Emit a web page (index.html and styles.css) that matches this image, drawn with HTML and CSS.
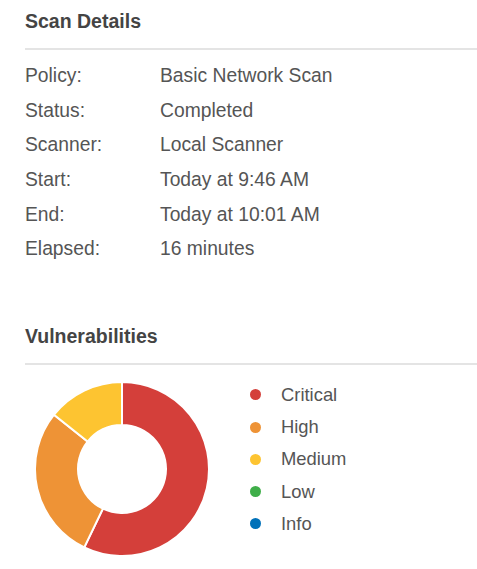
FILE: index.html
```html
<!DOCTYPE html>
<html>
<head>
<meta charset="utf-8">
<link rel="stylesheet" href="styles.css">
</head>
<body>
<div class="panel">
  <section class="section">
    <h2 class="section-title">Scan Details</h2>
    <dl class="details">
      <div class="row"><dt>Policy:</dt><dd>Basic Network Scan</dd></div>
      <div class="row"><dt>Status:</dt><dd>Completed</dd></div>
      <div class="row"><dt>Scanner:</dt><dd>Local Scanner</dd></div>
      <div class="row"><dt>Start:</dt><dd>Today at 9:46 AM</dd></div>
      <div class="row"><dt>End:</dt><dd>Today at 10:01 AM</dd></div>
      <div class="row"><dt>Elapsed:</dt><dd>16 minutes</dd></div>
    </dl>
  </section>
  <section class="section vulns">
    <h2 class="section-title">Vulnerabilities</h2>
    <div class="chart-area">
      <svg class="donut" width="180" height="180" viewBox="0 0 180 180">
        <path class="seg-critical" d="M90,3 A87,87 0 1 1 52.27,168.40 L70.92,129.65 A44,44 0 1 0 90,46 Z"/>
        <path class="seg-high" d="M52.27,168.40 A87,87 0 0 1 22.01,35.72 L55.61,62.55 A44,44 0 0 0 70.92,129.65 Z"/>
        <path class="seg-medium" d="M22.01,35.72 A87,87 0 0 1 90,3 L90,46 A44,44 0 0 0 55.61,62.55 Z"/>
      </svg>
      <ul class="legend">
        <li><span class="dot critical"></span>Critical</li>
        <li><span class="dot high"></span>High</li>
        <li><span class="dot medium"></span>Medium</li>
        <li><span class="dot low"></span>Low</li>
        <li><span class="dot info"></span>Info</li>
      </ul>
    </div>
  </section>
</div>
</body>
</html>
```
FILE: styles.css
```css
html, body {
  margin: 0;
  padding: 0;
  background: #fff;
}
body {
  font-family: "Liberation Sans", Arial, sans-serif;
  color: #555;
}
.panel {
  padding-left: 25px;
}
.section-title {
  margin: 0;
  padding: 9px 0 15px;
  line-height: 24px;
  font-size: 19.5px;
  font-weight: bold;
  color: #444;
  border-bottom: 2px solid #e4e4e4;
}
.details {
  margin: 9px 0 0;
  padding: 0;
}
.row {
  display: flex;
  height: 34.6px;
  align-items: center;
  font-size: 19.3px;
}
.row dt {
  width: 135px;
  margin: 0;
}
.row dd {
  margin: 0;
}
.vulns {
  margin-top: 48px;
}
.chart-area {
  display: flex;
  align-items: flex-start;
  margin-top: 14px;
}
.donut {
  display: block;
  margin-left: 7px;
}
.donut path {
  stroke: #fff;
  stroke-width: 2;
}
.seg-critical { fill: #d43f3a; }
.seg-high { fill: #ee9336; }
.seg-medium { fill: #fdc431; }
.legend {
  list-style: none;
  margin: 0 0 0 38px;
  padding: 0;
}
.legend li {
  display: flex;
  align-items: center;
  height: 32.3px;
  font-size: 18.4px;
}
.dot {
  width: 11px;
  height: 11px;
  border-radius: 50%;
  margin-right: 20px;
}
.dot.critical { background: #d43f3a; }
.dot.high { background: #ee9336; }
.dot.medium { background: #fdc431; }
.dot.low { background: #3fae49; }
.dot.info { background: #0071b9; }
```
